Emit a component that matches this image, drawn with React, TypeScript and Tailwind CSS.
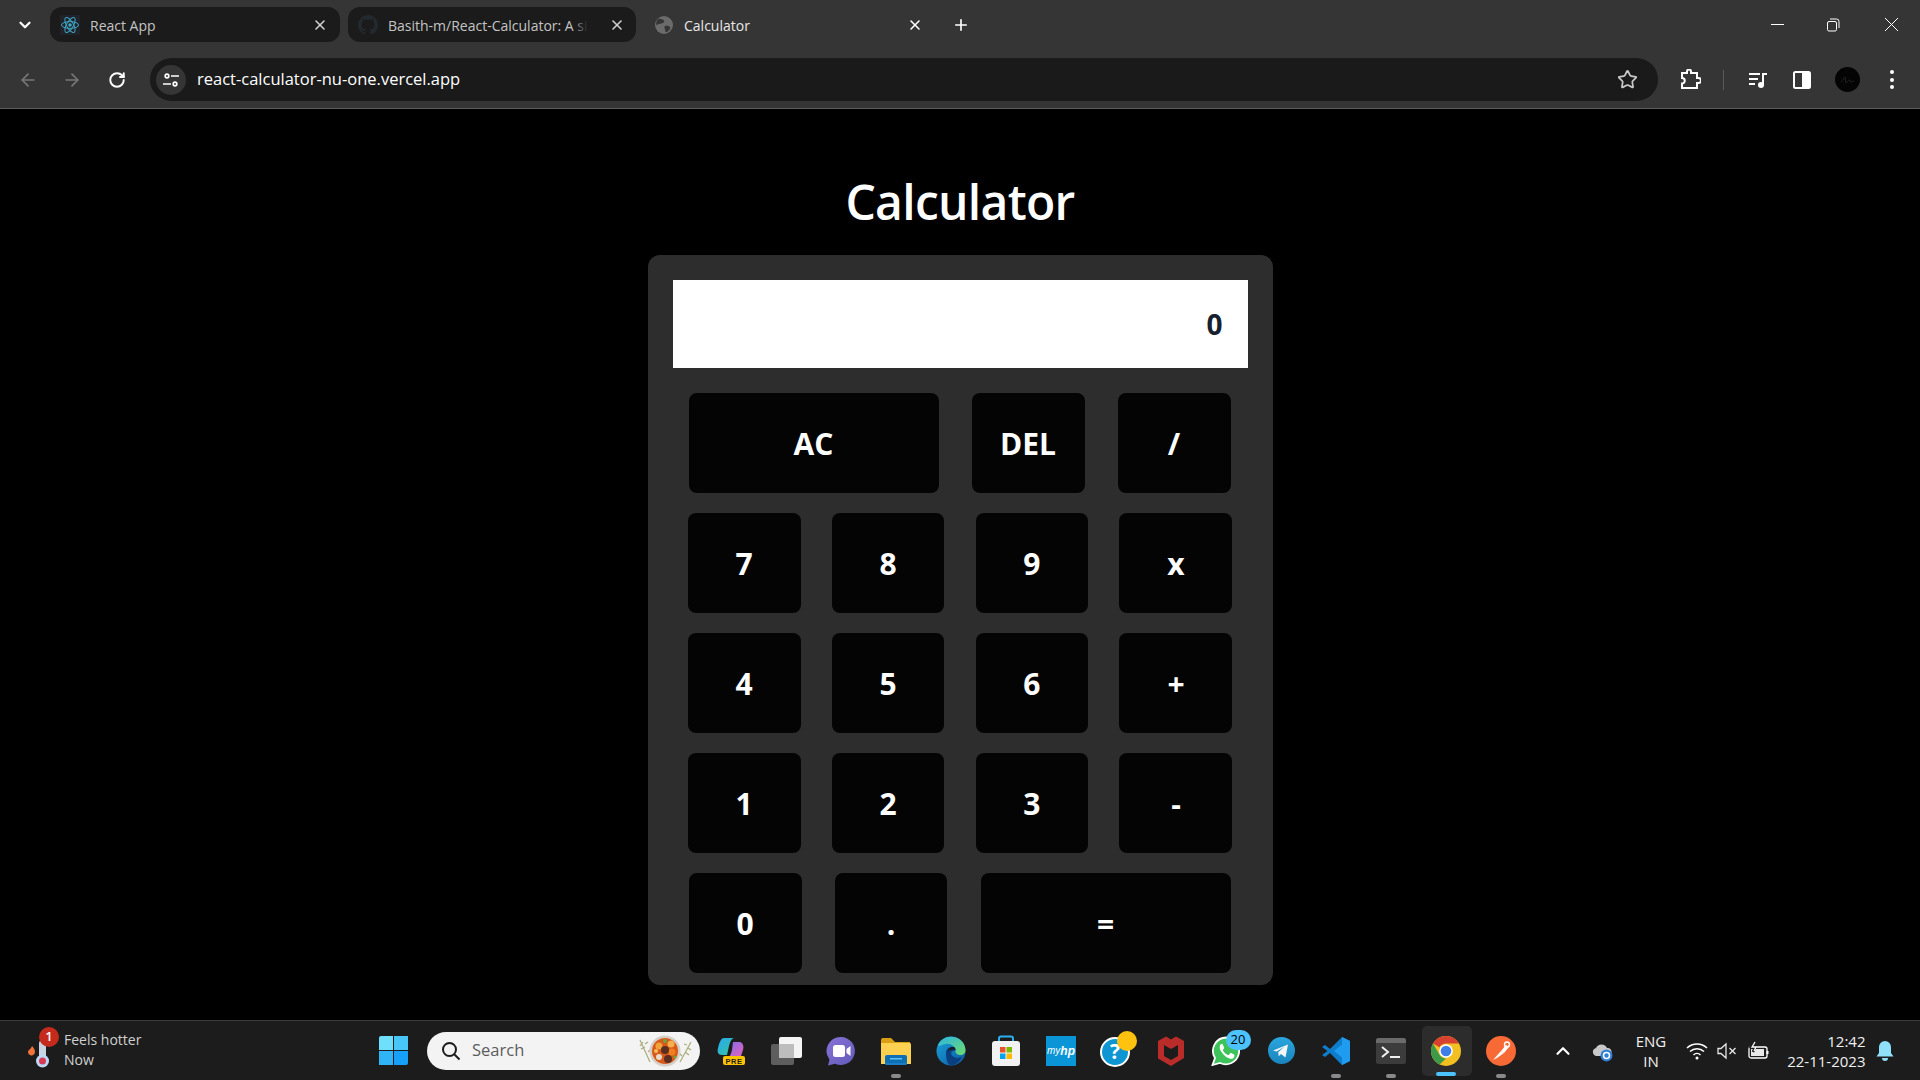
import React from "react";
import { ArrowLeft, ArrowRight, ChevronDown, ChevronUp, Plus, RotateCw, Star, X } from "lucide-react";

const Key = ({ label, w }: { label: string; w: string }) => (
  <button className={`h-[100px] ${w} rounded-[8px] bg-[#040404] text-white text-[30px] font-bold flex items-center justify-center`}>{label}</button>
);

const Row = ({ children, inset }: { children: React.ReactNode; inset?: boolean }) => (
  <div className={`flex justify-between ${inset ? "ml-[16px] mr-[17px]" : "ml-[15px] mr-[15px]"}`}>{children}</div>
);

const ReactLogo = () => (
  <svg width="20" height="20" viewBox="0 0 20 20" fill="none" stroke="#3fa7c4" strokeWidth="1">
    <rect width="20" height="20" fill="#20232a" stroke="none" rx="1" />
    <circle cx="10" cy="10" r="1.8" fill="#3fa7c4" stroke="none" />
    <ellipse cx="10" cy="10" rx="8.5" ry="3.4" />
    <ellipse cx="10" cy="10" rx="8.5" ry="3.4" transform="rotate(60 10 10)" />
    <ellipse cx="10" cy="10" rx="8.5" ry="3.4" transform="rotate(120 10 10)" />
  </svg>
);

const GithubLogo = () => (
  <svg width="20" height="20" viewBox="0 0 16 16" fill="#24292f">
    <path d="M8 0C3.58 0 0 3.58 0 8c0 3.54 2.29 6.53 5.47 7.59.4.07.55-.17.55-.38 0-.19-.01-.82-.01-1.49-2.01.37-2.53-.49-2.69-.94-.09-.23-.48-.94-.82-1.13-.28-.15-.68-.52-.01-.53.63-.01 1.08.58 1.23.82.72 1.21 1.87.87 2.33.66.07-.52.28-.87.51-1.07-1.78-.2-3.64-.89-3.64-3.95 0-.87.31-1.59.82-2.15-.08-.2-.36-1.02.08-2.12 0 0 .67-.21 2.2.82.64-.18 1.32-.27 2-.27s1.36.09 2 .27c1.53-1.04 2.2-.82 2.2-.82.44 1.1.16 1.92.08 2.12.51.56.82 1.27.82 2.15 0 3.07-1.87 3.75-3.65 3.95.29.25.54.73.54 1.48 0 1.07-.01 1.93-.01 2.2 0 .21.15.46.55.38A8.01 8.01 0 0 0 16 8c0-4.42-3.58-8-8-8z" />
  </svg>
);

const GlobeFav = () => (
  <svg width="20" height="20" viewBox="0 0 20 20">
    <circle cx="10" cy="10" r="9" fill="#6b6b6b" />
    <path d="M5 3.5c2 1 4 .5 5 2s-1 2.500-2.500 3-3.500 0-4.500 1.500-1.500-5 2-6.500zM11 11c2-.5 4 0 5 1s-1.500 4.500-3.500 5-1-2-1.500-3-1-2.700 0-3z" fill="#353535" />
  </svg>
);

const Tab = ({ icon, title, active, w, fade, pr }: { icon: React.ReactNode; title: string; active?: boolean; w: string; fade?: boolean; pr?: string }) => (
  <div className={`h-[35px] ${w} rounded-[12px] flex items-center pl-[10px] ${pr ?? "pr-[11px]"} ${active ? "" : "bg-[#1b1b1b]"}`}>
    <div className="w-[20px] h-[20px] shrink-0">{icon}</div>
    <div className="ml-[10px] flex-1 min-w-0">
      <span className={`relative inline-block whitespace-nowrap text-[14px] ${active ? "text-[#e8e8e8]" : "text-[#c4c4c4]"}`}>
        {title}
        {fade && <span className="absolute right-0 top-0 h-full w-[16px] bg-gradient-to-r from-transparent to-[#1b1b1b]" />}
      </span>
    </div>
    <X size={16} strokeWidth={2.4} className={`shrink-0 ml-[8px] ${active ? "text-white" : "text-[#d0d0d0]"}`} />
  </div>
);

const Slot = ({ children, dot, active }: { children: React.ReactNode; dot?: boolean; active?: boolean }) => (
  <div className="relative w-[55px] h-[50px] shrink-0 flex items-center justify-center">
    {active && <div className="absolute inset-y-0 left-[3px] right-[2px] rounded-[5px] bg-[#2c2c2c]" />}
    <div className="relative flex items-center justify-center">{children}</div>
    {dot && <div className="absolute bottom-[-2px] left-1/2 -translate-x-1/2 w-[10px] h-[4px] rounded-full bg-[#8a8a8a]" />}
    {active && <div className="absolute bottom-[0px] left-1/2 -translate-x-1/2 w-[20px] h-[4px] rounded-full bg-[#4cc2ff]" />}
  </div>
);

const Copilot = () => (
  <svg width="30" height="30" viewBox="0 0 30 30">
    <defs>
      <linearGradient id="cpa" x1="0" y1="0" x2="1" y2="1"><stop offset="0" stopColor="#2aa7f0" /><stop offset="1" stopColor="#33c6a0" /></linearGradient>
      <linearGradient id="cpb" x1="0" y1="0" x2="1" y2="1"><stop offset="0" stopColor="#7b6cf0" /><stop offset="1" stopColor="#e763b6" /></linearGradient>
    </defs>
    <path d="M8 2h10c-3 1-4 4-5 8l-2 9H6c-4 0-5-3-4-7 1-5 3-10 6-10z" fill="url(#cpa)" />
    <path d="M17 6h7c3 1 4 4 3 8l-2 6c-1 2-3 2-5 2h-9c3-1 4-4 5-8z" fill="url(#cpb)" />
    <rect x="7" y="20" width="22" height="9" rx="2" fill="#ffc400" />
    <text x="18" y="27.500" textAnchor="middle" fontSize="7.5" fontWeight="800" fill="#1c1c1c" fontFamily="'Liberation Sans',sans-serif" letterSpacing="0.5">PRE</text>
  </svg>
);

const TaskView = () => (
  <svg width="32" height="30" viewBox="0 0 32 30">
    <rect x="9" y="1" width="23" height="21" rx="2" fill="#f4f4f4" />
    <rect x="1" y="8" width="23" height="21" rx="2" fill="#6a6a6a" fillOpacity=".85" />
    <rect x="9" y="8" width="15" height="14" fill="#bdbdbd" />
  </svg>
);

const Meet = () => (
  <svg width="30" height="30" viewBox="0 0 30 30">
    <defs><linearGradient id="mt" x1="0" y1="0" x2="1" y2="1"><stop offset="0" stopColor="#8a72d8" /><stop offset="1" stopColor="#5f5bb8" /></linearGradient></defs>
    <path d="M15 1a14 14 0 1 1-6 26.700L2 29.500l1.500-6A14 14 0 0 1 15 1z" fill="url(#mt)" />
    <rect x="7" y="9" width="12" height="12" rx="2.500" fill="#fff" />
    <path d="M20.500 13l4-3v10l-4-3z" fill="#fff" />
  </svg>
);

const Files = () => (
  <svg width="32" height="30" viewBox="0 0 32 30">
    <path d="M1 4a2 2 0 0 1 2-2h8l4 4h15v4H1z" fill="#d9a016" />
    <path d="M1 7h29a2 2 0 0 1 1 2v19H1z" fill="#fcd050" />
    <rect x="5" y="20" width="22" height="9" rx="1.500" fill="#1a7fc4" />
    <rect x="5" y="19" width="22" height="8" rx="2" fill="#0f6fb4" />
    <rect x="10" y="22" width="12" height="1.500" fill="#5fc3f5" />
  </svg>
);

const Edge = () => (
  <svg width="30" height="30" viewBox="0 0 30 30">
    <defs>
      <linearGradient id="ed" x1="0" y1="0" x2="1" y2="1"><stop offset="0" stopColor="#1aa3d8" /><stop offset="1" stopColor="#0c59a4" /></linearGradient>
      <linearGradient id="ed2" x1="0" y1="0" x2="1" y2="1"><stop offset="0" stopColor="#2bb5e5" /><stop offset="1" stopColor="#6fdc6a" /></linearGradient>
    </defs>
    <circle cx="15" cy="15" r="14.500" fill="url(#ed)" />
    <path d="M2 9C5 2 13-1 20 1.500c6 2 9.500 7 9.500 13 0 3-3 5-6 4.500s-4-2-4-4c0-5-5-8-10-7S3 11 2 9z" fill="url(#ed2)" />
    <path d="M10 17c0-4 3-6 6-6s3.500 2 3.500 3-2 .5-3.500 1.500-1 4 2 5.500 6 1 8-.5C24 26 19 29.500 15 29.500 11 29 10 22 10 17z" fill="#0a3f80" />
    <path d="M12 16c0-3 2-5 5-5 2 0 2.500 1.500 2.500 3-2-1-7-.5-7.500 2z" fill="#1c1c1c" />
  </svg>
);

const Store = () => (
  <svg width="30" height="32" viewBox="0 0 30 32">
    <path d="M8 6V3.500a2 2 0 0 1 2-2h10a2 2 0 0 1 2 2V6" fill="none" stroke="#2bb0ee" strokeWidth="2" />
    <rect x="1" y="6" width="28" height="25" rx="3" fill="#f2f2f2" />
    <rect x="9" y="12" width="5.500" height="5.500" fill="#e8532a" />
    <rect x="15.500" y="12" width="5.500" height="5.500" fill="#7db800" />
    <rect x="9" y="18.500" width="5.500" height="5.500" fill="#00a4ef" />
    <rect x="15.500" y="18.500" width="5.500" height="5.500" fill="#ffb900" />
  </svg>
);

const MyHp = () => (
  <div className="w-[30px] h-[30px] bg-[#0a96d6] flex items-center justify-center text-white text-[10px] italic" style={{ fontFamily: "'Liberation Sans',sans-serif" }}>
    my<span className="font-bold text-[12px]">hp</span>
  </div>
);

const Help = () => (
  <div className="relative w-[30px] h-[30px] mt-[2px] ml-[-2px]">
    <div className="w-[30px] h-[30px] rounded-full bg-[#0e96d2] border-2 border-white flex items-center justify-center text-white text-[21px] font-bold leading-none">?</div>
    <div className="absolute -top-[6px] -right-[7px] w-[20px] h-[20px] rounded-full bg-[#ffc20e]" />
  </div>
);

const McAfee = () => (
  <svg width="28" height="30" viewBox="0 0 28 30">
    <path d="M1 5l8-4.500 5 3 5-3 8 4.500v17L14 30 1 22.500z" fill="#b92c2a" />
    <path d="M7 9l7 4 7-4v11l-7 4-7-4z" fill="#1c1c1c" />
  </svg>
);

const WhatsApp = () => (
  <div className="relative w-[30px] h-[30px] ml-[-1px]">
    <svg width="30" height="30" viewBox="0 0 30 30">
      <path d="M15.300 1.500A13.400 13.400 0 0 0 4 22L1.500 29l7.500-2A13.400 13.400 0 1 0 15.300 1.500z" fill="#3ec35a" stroke="#fff" strokeWidth="1.800" />
      <path d="M10.500 8c-.6 0-1.800 1-1.800 3.200s1.600 4.500 2 5c.4.500 3.200 4.800 7.700 6.300 3 1 4.200-.6 4.700-1.600.4-1 .4-2 .2-2.200l-3-1.600c-.5-.2-.8-.2-1.100.2l-1.200 1.500c-.3.300-.6.300-1 .1-2.300-1-3.800-2.500-5-4.500-.3-.5 0-.7.200-1l.8-1.200c.2-.3.100-.6 0-.8l-1.300-3.100c-.3-.5-.6-.4-1.200-.4z" fill="#fff" />
    </svg>
    <div className="absolute -top-[6px] -right-[10px] w-[25px] h-[20px] rounded-full bg-[#4cc2ff] flex items-center justify-center text-[13px] text-black">20</div>
  </div>
);

const Telegram = () => (
  <svg width="27" height="27" viewBox="0 0 27 27">
    <defs><linearGradient id="tg" x1="0" y1="0" x2="0" y2="1"><stop offset="0" stopColor="#2aa6de" /><stop offset="1" stopColor="#1a84bd" /></linearGradient></defs>
    <circle cx="13.500" cy="13.500" r="13.500" fill="url(#tg)" />
    <path d="M5 13.500l15-6-2.500 13-4.500-3.500-2.300 2.200-.5-4 6-5.500-7.500 4.700z" fill="#f4f4f4" />
  </svg>
);

const VSCode = () => (
  <svg width="30" height="30" viewBox="0 0 30 30">
    <path d="M21 1l8 4v20l-8 4-12-12-5 4-3-2 5.500-4L1 11l3-2 5 4z" fill="#0e7ecb" />
    <path d="M21 1l8 4v20l-8 4zM21 8.500L13 15l8 6.500z" fill="#1f9cf0" fillRule="evenodd" />
  </svg>
);

const Terminal = () => (
  <svg width="30" height="26" viewBox="0 0 30 26">
    <rect width="30" height="26" rx="2.500" fill="#3c3c3c" />
    <path d="M2.500 0h25A2.500 2.500 0 0 1 30 2.500V5H0V2.500A2.500 2.500 0 0 1 2.500 0z" fill="#6b6b6b" />
    <path d="M6 9l6 5-6 5" fill="none" stroke="#f0f0f0" strokeWidth="2" />
    <rect x="14" y="18" width="10" height="2" fill="#f0f0f0" />
  </svg>
);

const Chrome = () => (
  <svg width="30" height="30" viewBox="0 0 48 48">
    <circle cx="24" cy="24" r="24" fill="#f2c020" />
    <path d="M24 0a24 24 0 0 1 20.800 12H24a12 12 0 0 0-10.400 6L3.200 12A24 24 0 0 1 24 0z" fill="#d8402f" />
    <path d="M3.200 12l10.400 18a12 12 0 0 0 10.400 6L13.600 45.600A24 24 0 0 1 3.200 12z" fill="#3c9a48" />
    <circle cx="24" cy="24" r="11" fill="#fff" />
    <circle cx="24" cy="24" r="8.500" fill="#3f7ee8" />
  </svg>
);

const Postman = () => (
  <svg width="30" height="30" viewBox="0 0 30 30">
    <circle cx="15" cy="15" r="15" fill="#f76935" />
    <path d="M7 24l8-9 3 2-7 5z" fill="#fff" />
    <path d="M15 15l5-6 3 2-5 6z" fill="#fff" />
    <circle cx="21" cy="8.500" r="2.500" fill="none" stroke="#fff" strokeWidth="1.400" />
  </svg>
);

const WinLogo = () => (
  <div className="grid grid-cols-2 gap-[1px] w-[29px] h-[29px]">
    <div className="bg-[#6fe0fb] rounded-tl-[2px]" />
    <div className="bg-[#47c6f7]" />
    <div className="bg-[#2fb5f7]" />
    <div className="bg-[#16a0f7] rounded-br-[2px]" />
  </div>
);

const Bowl = () => (
  <svg width="56" height="34" viewBox="0 0 56 34">
    <g fill="none" stroke="#a9ac7a" strokeWidth="1.200">
      <path d="M2 6l10 22M5 8l-3 4M7 13l-4 2M7 10l3-2M10 18l3-3" />
      <path d="M53 8L42 28M50 14l3 2M47 18l4 3M49 11l-3-1M44 22l-3-3" />
    </g>
    <circle cx="27" cy="17" r="15.500" fill="#d6cfc8" />
    <circle cx="27" cy="17" r="13" fill="#d9591a" />
    <circle cx="21" cy="12" r="3.500" fill="#f2a23a" />
    <circle cx="33" cy="10" r="3.500" fill="#f4b04a" />
    <circle cx="34" cy="18" r="3.500" fill="#f0801e" />
    <circle cx="27" cy="16" r="4" fill="#5a2f22" />
    <circle cx="30" cy="25" r="4" fill="#5a2f22" />
    <circle cx="21" cy="23" r="3" fill="#e8dcc8" />
    <circle cx="27" cy="7" r="2" fill="#6aa83a" />
    <circle cx="37" cy="23" r="1.500" fill="#6aa83a" />
    <circle cx="18" cy="17" r="2" fill="#f5c25a" />
  </svg>
);

export default function App() {
  return (
    <div className="w-full h-screen overflow-hidden flex flex-col bg-black" style={{ fontFamily: "'Open Sans','Noto Sans',sans-serif" }}>
      {/* browser chrome */}
      <header className="h-[109px] shrink-0 bg-[#353535] border-b border-[#5e5e5e] flex flex-col">
        <div className="h-[58px] flex items-start pt-[7px]">
          <div className="w-[50px] h-[35px] flex items-center justify-center shrink-0">
            <ChevronDown size={18} strokeWidth={3} className="text-white" />
          </div>
          <Tab w="w-[290px]" pr="pr-[12px]" icon={<ReactLogo />} title="React App" />
          <div className="w-[8px] shrink-0" />
          <Tab w="w-[288px]" icon={<GithubLogo />} title="Basith-m/React-Calculator: A si" fade />
          <div className="w-[8px] shrink-0" />
          <Tab w="w-[290px]" active icon={<GlobeFav />} title="Calculator" />
          <div className="w-[27px] h-[35px] flex items-center justify-center shrink-0 ml-[13px]">
            <Plus size={18} strokeWidth={2.2} className="text-white" />
          </div>
          <div className="flex-1" />
          <div className="flex h-[35px] items-center pr-[21px] text-white">
            <div className="w-[13px] h-px bg-white" />
            <svg className="ml-[42px]" width="14" height="14" viewBox="0 0 14 14" fill="none" stroke="white" strokeWidth="1"><rect x="1.500" y="3.500" width="9" height="9.500" rx="1.500" /><path d="M4 1h6.500A2.500 2.500 0 0 1 13 3.500V10" /></svg>
            <svg className="ml-[44px]" width="15" height="15" viewBox="0 0 15 15" fill="none" stroke="white" strokeWidth="1"><path d="M1 1l13 13M14 1L1 14" /></svg>
          </div>
        </div>
        <div className="h-[50px] flex items-start">
          <div className="w-[150px] h-[43px] shrink-0 flex items-center pl-[18px]">
            <ArrowLeft size={20} strokeWidth={2} className="text-[#777777]" />
            <ArrowRight size={20} strokeWidth={2} className="text-[#777777] ml-[24px]" />
            <RotateCw size={18} strokeWidth={2.6} className="text-white ml-[26px]" />
          </div>
          <div className="w-[1508px] h-[43px] shrink-0 rounded-full bg-[#1a1a1a] flex items-center pl-[6px] pr-[20px]">
            <div className="w-[30px] h-[30px] rounded-full bg-[#353535] flex items-center justify-center shrink-0">
              <svg width="18" height="18" viewBox="0 0 18 18" fill="none" stroke="white" strokeWidth="1.700">
                <circle cx="5" cy="5" r="1.800" /><path d="M9 5h8M1 13h8" /><circle cx="13" cy="13" r="1.800" />
              </svg>
            </div>
            <span className="ml-[11px] text-[16.500px] text-white whitespace-nowrap">react-calculator-nu-one.vercel.app</span>
            <div className="flex-1" />
            <Star size={21} strokeWidth={2} className="text-[#c8c8c8]" />
          </div>
          <div className="flex-1 h-[43px] flex items-center text-white">
            <svg className="ml-[21px]" width="22" height="22" viewBox="0 0 22 22" fill="none" stroke="white" strokeWidth="2"><path d="M3 5h5V3.500a2 2 0 0 1 4 0V5h6v5h1.500a2.500 2.500 0 0 1 0 5H18v5H3v-4.500a2.500 2.500 0 0 0 0-5.500z" transform="translate(0 -1)" /></svg>
            <div className="ml-[22px] w-px h-[20px] bg-[#5a5a5a]" />
            <svg className="ml-[24px]" width="20" height="20" viewBox="0 0 20 20" fill="white"><rect x="1" y="3" width="11" height="2" /><rect x="1" y="8" width="9" height="2" /><rect x="1" y="13" width="6" height="2" /><rect x="14" y="3" width="5" height="2" /><rect x="14" y="3" width="2" height="12" /><circle cx="13" cy="15" r="3" /></svg>
            <svg className="ml-[25px]" width="18" height="18" viewBox="0 0 18 18"><rect x="1" y="1" width="16" height="16" rx="1.500" fill="none" stroke="white" strokeWidth="2" /><rect x="9" y="1" width="8" height="16" fill="white" /></svg>
            <svg className="ml-[24px]" width="25" height="25" viewBox="0 0 25 25"><circle cx="12.500" cy="12.500" r="12.500" fill="#040404" /><path d="M6 15c2-1 3-5 4-5s0 6 1 6 2-3 3-3 1 2 2 2 2-1 3-1" fill="none" stroke="#2a2a2a" strokeWidth="0.800" /></svg>
            <div className="ml-[30px] flex flex-col gap-[3.500px]">
              <div className="w-[4px] h-[4px] rounded-full bg-white" />
              <div className="w-[4px] h-[4px] rounded-full bg-white" />
              <div className="w-[4px] h-[4px] rounded-full bg-white" />
            </div>
          </div>
        </div>
      </header>

      {/* page */}
      <main className="flex-1 min-h-0 bg-black flex flex-col items-center">
        <h1 className="mt-[57px] h-[72px] leading-[72px] text-[48px] font-semibold tracking-[-0.7px] text-white">Calculator</h1>
        <div className="mt-[17px] w-[625px] h-[730px] rounded-[12px] bg-[#2d2d2d] pt-[25px] px-[25px] flex flex-col">
          <div className="h-[88px] bg-white flex items-center justify-end pr-[25px] text-[#17202e] text-[28px] font-bold">0</div>
          <div className="mt-[25px] flex flex-col gap-[20px]">
            <Row inset>
              <Key label="AC" w="w-[250px]" />
              <Key label="DEL" w="w-[113px]" />
              <Key label="/" w="w-[113px]" />
            </Row>
            <Row>
              <Key label="7" w="w-[113px]" />
              <Key label="8" w="w-[112px]" />
              <Key label="9" w="w-[112px]" />
              <Key label="x" w="w-[113px]" />
            </Row>
            <Row>
              <Key label="4" w="w-[113px]" />
              <Key label="5" w="w-[112px]" />
              <Key label="6" w="w-[112px]" />
              <Key label="+" w="w-[113px]" />
            </Row>
            <Row>
              <Key label="1" w="w-[113px]" />
              <Key label="2" w="w-[112px]" />
              <Key label="3" w="w-[112px]" />
              <Key label="-" w="w-[113px]" />
            </Row>
            <Row inset>
              <Key label="0" w="w-[113px]" />
              <Key label="." w="w-[112px]" />
              <Key label="=" w="w-[250px]" />
            </Row>
          </div>
        </div>
      </main>

      {/* taskbar */}
      <footer className="h-[60px] shrink-0 bg-[#1c1c1c] border-t border-[#3a3a3a] flex items-center text-[#e0e0e0]">
        <div className="w-[366px] shrink-0 flex items-center pl-[25px]">
          <div className="relative w-[39px] h-[40px] shrink-0">
            <svg width="32" height="34" viewBox="0 0 32 34" className="absolute left-[2px] top-[6px]">
              <path d="M5 9c2 2 3 4 3 6s-2 3.500-3.500 3.500S1 17 1 15s3-3 4-6z" fill="#f0743a" />
              <rect x="12" y="3" width="7" height="20" rx="3.500" fill="#c9d4e0" />
              <circle cx="15.500" cy="24" r="6.500" fill="#bcd8f4" />
              <circle cx="15.500" cy="24" r="3.500" fill="#d83a55" />
            </svg>
            <div className="absolute left-[14px] top-[-4px] w-[20px] h-[20px] rounded-full bg-[#c42b1c] text-white text-[13px] font-semibold flex items-center justify-center">1</div>
          </div>
          <div className="text-[14px] leading-[20px] mt-[-2px] text-[#d0d0d0] whitespace-nowrap">
            <div>Feels hotter</div>
            <div>Now</div>
          </div>
        </div>
        <div className="w-[61px] shrink-0 flex justify-start pl-[13px]"><WinLogo /></div>
        <div className="w-[273px] h-[38px] shrink-0 rounded-full bg-[#f3f3f3] flex items-center pl-[14px] pr-[6px]">
          <svg width="20" height="20" viewBox="0 0 20 20" fill="none" stroke="#1c1c1c" strokeWidth="2"><circle cx="8.500" cy="8.500" r="6.500" /><path d="M13.500 13.500L18.500 18.500" /></svg>
          <span className="ml-[11px] text-[16.500px] text-[#5c5c5c]">Search</span>
          <div className="flex-1" />
          <Bowl />
        </div>
        <div className="flex items-center ml-[3.500px]">
          <Slot><Copilot /></Slot>
          <Slot><TaskView /></Slot>
          <Slot><Meet /></Slot>
          <Slot dot><Files /></Slot>
          <Slot><Edge /></Slot>
          <Slot><Store /></Slot>
          <Slot><MyHp /></Slot>
          <Slot><Help /></Slot>
          <Slot><McAfee /></Slot>
          <Slot><WhatsApp /></Slot>
          <Slot><Telegram /></Slot>
          <Slot dot><VSCode /></Slot>
          <Slot dot><Terminal /></Slot>
          <Slot active><Chrome /></Slot>
          <Slot dot><Postman /></Slot>
        </div>
        <div className="flex-1 flex items-center text-white">
          <ChevronUp size={22} strokeWidth={2.4} className="ml-[23px]" />
          <svg className="ml-[17px]" width="22" height="22" viewBox="0 0 22 22">
            <path d="M2 13a4 4 0 0 1 3-5 6 6 0 0 1 11 0 4 4 0 0 1 1 8H5a4 4 0 0 1-3-3z" fill="#c8c8c8" />
            <circle cx="15.500" cy="15.500" r="6" fill="#2f7fd6" />
            <circle cx="15.500" cy="15.500" r="3" fill="none" stroke="white" strokeWidth="1.500" />
          </svg>
          <div className="ml-[22px] w-[33px] text-center text-[15px] leading-[20px] text-[#f0f0f0]"><div>ENG</div><div>IN</div></div>
          <svg className="ml-[18px]" width="22" height="18" viewBox="0 0 22 18" fill="none" stroke="white" strokeWidth="1.500"><path d="M1 6a14.500 14.500 0 0 1 20 0M4 9.500a10 10 0 0 1 14 0M7.500 13a5 5 0 0 1 7 0" /><circle cx="11" cy="16" r="1.500" fill="white" stroke="none" /></svg>
          <svg className="ml-[9px]" width="20" height="18" viewBox="0 0 20 18" fill="none" stroke="#e8e8e8" strokeWidth="1.300"><path d="M1 6.500h3L9 2v14l-5-4.500H1zM12.500 6l6 6M18.500 6l-6 6" /></svg>
          <svg className="ml-[11px]" width="22" height="20" viewBox="0 0 22 20" fill="none" stroke="white" strokeWidth="1.300"><rect x="1" y="6" width="18" height="11" rx="2" /><rect x="3" y="8" width="13" height="7" fill="#e8e8e8" stroke="none" /><path d="M19.500 10v3" strokeWidth="2" /><path d="M7 0L3 6h4l-2 5" stroke="#1c1c1c" strokeWidth="2.600" /><path d="M7 1L4 6h4l-2 4" /></svg>
          <div className="ml-[16px] w-[80px] text-right text-[15px] leading-[20px] text-[#f0f0f0] whitespace-nowrap flex flex-col items-end shrink-0"><div>12:42</div><div>22-11-2023</div></div>
          <svg className="ml-[10px]" width="18" height="22" viewBox="0 0 18 22"><path d="M9 1a6 6 0 0 1 6 6v6l2.500 3.500H.5L3 13V7a6 6 0 0 1 6-6z" fill="#8fe0fb" /><path d="M6 18h6a3 3 0 0 1-6 0z" fill="#8fe0fb" /></svg>
        </div>
      </footer>
    </div>
  );
}
